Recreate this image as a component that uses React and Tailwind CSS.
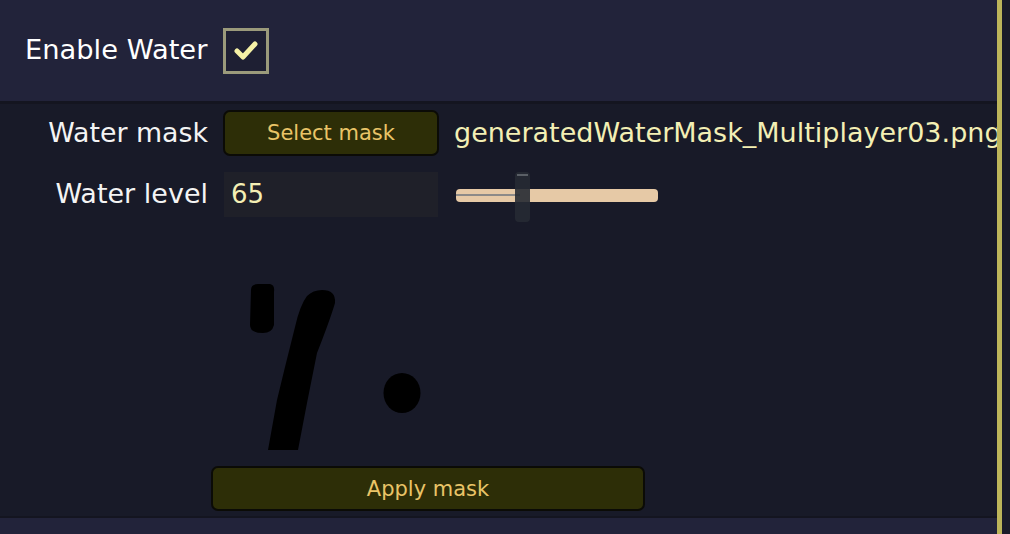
import React from 'react';

const font = { fontFamily: '"DejaVu Sans", "Open Sans", sans-serif' };

function OliveButton({ children, className }) {
  return (
    <button
      className={`flex items-center justify-center rounded-[7px] border-2 border-[#0b0b06] bg-[#2d2e07] pt-[2px] text-[#e9c467] ${className}`}
    >
      {children}
    </button>
  );
}

export default function App() {
  return (
    <div className="flex h-[534px] w-[1010px] overflow-hidden bg-[#181a28]" style={font}>
      <div className="flex min-w-0 flex-1 flex-col">
        {/* Header */}
        <div className="flex h-[104px] shrink-0 items-center gap-[16px] border-b-[3px] border-[#141520] bg-[#22233a] pl-[25px]">
          <span className="text-[27.3px] text-white">Enable Water</span>
          <div className="flex h-[46px] w-[46px] items-center justify-center border-[3px] border-[#9b9a7b] bg-[#1e1f33]">
            <svg width="24" height="20" viewBox="0 0 24 20">
              <polyline
                points="3,10 9,16 21,3"
                fill="none"
                stroke="#f6f1a6"
                strokeWidth="5"
                strokeLinecap="round"
                strokeLinejoin="round"
              />
            </svg>
          </div>
        </div>

        {/* Content */}
        <div className="flex h-[412px] shrink-0 flex-col bg-[#181a28]">
          <div className="mt-[6px] flex h-[46px] items-center">
            <span className="w-[208px] shrink-0 text-right text-[26.8px] text-[#f4f4f4]">Water mask</span>
            <OliveButton className="ml-[15px] h-[46px] w-[216px] shrink-0 text-[21px]">Select mask</OliveButton>
            <span className="ml-[15px] whitespace-nowrap text-[27px] text-[#f3efb4]">
              generatedWaterMask_Multiplayer03.png
            </span>
          </div>

          <div className="mt-[16px] flex h-[45px] items-center">
            <span className="w-[208px] shrink-0 text-right text-[27px] text-[#f4f4f4]">Water level</span>
            <div className="ml-[16px] flex h-[45px] w-[214px] shrink-0 items-center bg-[#1f2029] pl-[7px] text-[26px] text-[#f3efb4]">
              65
            </div>
            <div className="relative ml-[18px] h-[50px] w-[202px] self-start">
              <div className="absolute left-0 top-[17px] h-[13px] w-[202px] rounded-[4px] bg-[#e6c9a6]" />
              <div className="absolute left-0 top-[22px] h-[2px] w-[64px] bg-[#8c8a88]" />
              <div className="absolute left-[59px] top-0 h-[50px] w-[15px] rounded-[4px] bg-[#262a33] opacity-90" />
              <div className="absolute left-[61px] top-[2px] h-[2px] w-[11px] bg-[#5a5f66]" />
            </div>
          </div>

          <svg className="ml-[240px] mt-[63px]" width="190" height="172" viewBox="240 280 190 172">
            <path
              d="M251 290 Q251 284 258 284 L270 284 Q275 285 274 292 L274 325 Q272 333 263 333 Q250 333 250 325 Z"
              fill="#000"
            />
            <path
              d="M322 290 Q336 290 335 303 Q330 320 317 353 L307 403 L298 450 L268 450 L277 400 L285 367 L295 327 Q300 305 307 296 Q313 290 322 290 Z"
              fill="#000"
            />
            <ellipse cx="402" cy="393" rx="18.5" ry="20" fill="#000" />
          </svg>

          <OliveButton className="ml-[211px] mt-[14px] h-[45px] w-[434px] text-[21px]">Apply mask</OliveButton>
        </div>

        {/* Footer strip */}
        <div className="flex-1 border-t-[2px] border-[#141520] bg-[#22233a]" />
      </div>
      <div className="w-[5px] shrink-0 bg-[#bdb55a]" />
      <div className="w-[8px] shrink-0 bg-[#1b1c2a]" />
    </div>
  );
}
